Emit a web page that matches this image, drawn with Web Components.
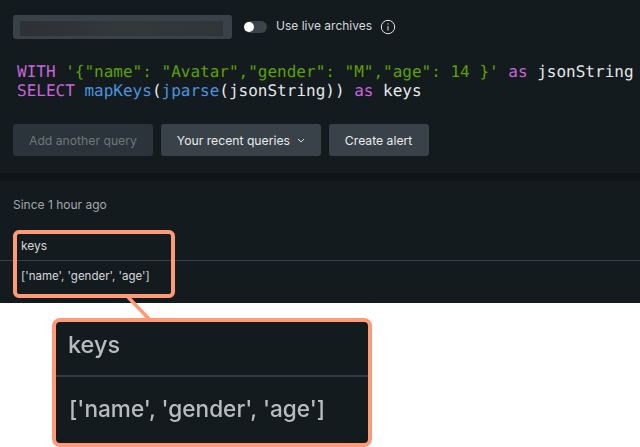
<!DOCTYPE html>
<html>
<head>
<meta charset="utf-8">
<style>
html, body { margin: 0; padding: 0; background: #fff; }
body { width: 640px; height: 447px; overflow: hidden; position: relative; font-family: Inter, "Liberation Sans", sans-serif; }
</style>
</head>
<body>
<query-page></query-page>
<result-callout></result-callout>
<script>
class QueryToolbar extends HTMLElement {
    constructor() {
        super();
        this.shadow = this.attachShadow({mode: 'open'});
        this.shadow.innerHTML = `
            <style>
                :host { display: flex; align-items: center; height: 24px; }
                .account { width: 219px; height: 24px; box-sizing: border-box; padding: 6px 9px 3px 7px; background: #3a4249; border-radius: 3px; }
                .account div { height: 15px; background: linear-gradient(90deg, #2d3036, #33383b 50%, #2f3538); }
                .toggle { width: 23px; height: 12px; margin-left: 12px; border-radius: 6px; background: #3c444b; position: relative; }
                .toggle::before { content: ''; position: absolute; left: 0; top: 1px; width: 10px; height: 10px; border-radius: 50%; background: #fff; }
                .label { margin-left: 9px; font-size: 12px; line-height: 22px; margin-bottom: 2px; color: #d5d8da; }
                svg { margin-left: 8px; display: block; }
            </style>
            <div class="account"><div></div></div>
            <div class="toggle"></div>
            <span class="label">Use live archives</span>
            <svg width="16" height="16" viewBox="0 0 16 16" fill="none" stroke="#e4e6e7">
                <circle cx="8" cy="8" r="6.7"/>
                <path d="M8 7v4.5"/>
                <path d="M8 4.3v1.3"/>
            </svg>
        `;
    }
}
customElements.define('query-toolbar', QueryToolbar);

class CodeEditor extends HTMLElement {
    constructor() {
        super();
        this.shadow = this.attachShadow({mode: 'open'});
        this.shadow.innerHTML = `
            <style>
                :host { display: block; font: 16px/19px "DejaVu Sans Mono", monospace; color: #e6e8e9; text-rendering: geometricPrecision; }
                div { white-space: pre; }
                .k { color: #c764d9; }
                .s { color: #5da100; }
                .f { color: #4b93df; }
            </style>
            <div><span class="k">WITH</span> <span class="s">'{"name": "Avatar","gender": "M","age": 14 }'</span> <span class="k">as</span> jsonString</div>
            <div><span class="k">SELECT</span> <span class="f">mapKeys</span>(<span class="f">jparse</span>(jsonString)) <span class="k">as</span> keys</div>
        `;
    }
}
customElements.define('code-editor', CodeEditor);

class NrButton extends HTMLElement {
    constructor() {
        super();
        this.shadow = this.attachShadow({mode: 'open'});
        this.shadow.innerHTML = `
            <style>
                :host { display: flex; align-items: center; height: 32px; padding: 0 16px; box-sizing: border-box; border-radius: 3px; background: #3a4249; color: #e8eaeb; font-size: 12.2px; white-space: nowrap; }
                :host([disabled]) { background: #2a343a; color: #6f777c; }
            </style>
            <slot></slot>
        `;
    }
}
customElements.define('nr-button', NrButton);

class QueryPage extends HTMLElement {
    constructor() {
        super();
        this.shadow = this.attachShadow({mode: 'open'});
        this.shadow.innerHTML = `
            <style>
                :host { display: block; height: 303px; background: #141b1f; color: #e6e8e9; }
                .top { height: 173px; box-sizing: border-box; padding: 15px 0 0 13px; }
                code-editor { margin: 23px 0 0 4px; }
                .buttons { display: flex; gap: 8px; margin-top: 24px; }
                .band { height: 8px; background: #0f1517; }
                .since { margin: 16px 0 0 13px; font-size: 12px; line-height: 15px; color: #a3a8ab; }
                .head { height: 30px; margin-top: 18px; padding: 0 21px; display: flex; align-items: center; font-size: 12px; color: #d5d8da; border-bottom: 1px solid #3a4249; }
                .row { height: 30px; padding: 0 21px; display: flex; align-items: center; font-size: 11.5px; color: #d5d8da; }
            </style>
            <div class="top">
                <query-toolbar></query-toolbar>
                <code-editor></code-editor>
                <div class="buttons">
                    <nr-button disabled>Add another query</nr-button>
                    <nr-button style="width:160px">Your recent queries
                        <svg width="8" height="5" viewBox="0 0 8 5" fill="none" stroke="#e8eaeb" style="margin-left:7px"><path d="M1 1l3 3 3-3"/></svg>
                    </nr-button>
                    <nr-button style="width:100px">Create alert</nr-button>
                </div>
            </div>
            <div class="band"></div>
            <div class="since">Since 1 hour ago</div>
            <div class="head">keys</div>
            <div class="row">['name', 'gender', 'age']</div>
        `;
    }
}
customElements.define('query-page', QueryPage);

class ResultCallout extends HTMLElement {
    constructor() {
        super();
        this.shadow = this.attachShadow({mode: 'open'});
        this.shadow.innerHTML = `
            <style>
                :host { display: block; position: absolute; inset: 0; pointer-events: none; }
                .ring { position: absolute; left: 13px; top: 230px; width: 162px; height: 68px; box-sizing: border-box; border: 4px solid #ff9a76; border-radius: 6px; }
                svg { position: absolute; left: 0; top: 0; }
                .zoomed { position: absolute; left: 52px; top: 318px; width: 320px; height: 129px; box-sizing: border-box; border: 4px solid #ff9a76; border-radius: 8px; background: #141b1f; color: #b9bcbe; }
                .zoomed .head { height: 55px; box-sizing: border-box; padding: 0 12px 9px; display: flex; align-items: center; font-size: 23.5px; font-weight: 500; filter: blur(.6px); border-bottom: 2px solid #333a40; }
                .zoomed .row { height: 66px; box-sizing: border-box; padding: 0 13px 3px; display: flex; align-items: center; font-size: 22.6px; font-weight: 500; filter: blur(.6px); white-space: nowrap; }
            </style>
            <div class="ring"></div>
            <svg width="640" height="447"><path d="M128 297L149 319" stroke="#ff9a76" stroke-width="3.5"/></svg>
            <div class="zoomed">
                <div class="head">keys</div>
                <div class="row">['name', 'gender', 'age']</div>
            </div>
        `;
    }
}
customElements.define('result-callout', ResultCallout);
</script>
</body>
</html>
